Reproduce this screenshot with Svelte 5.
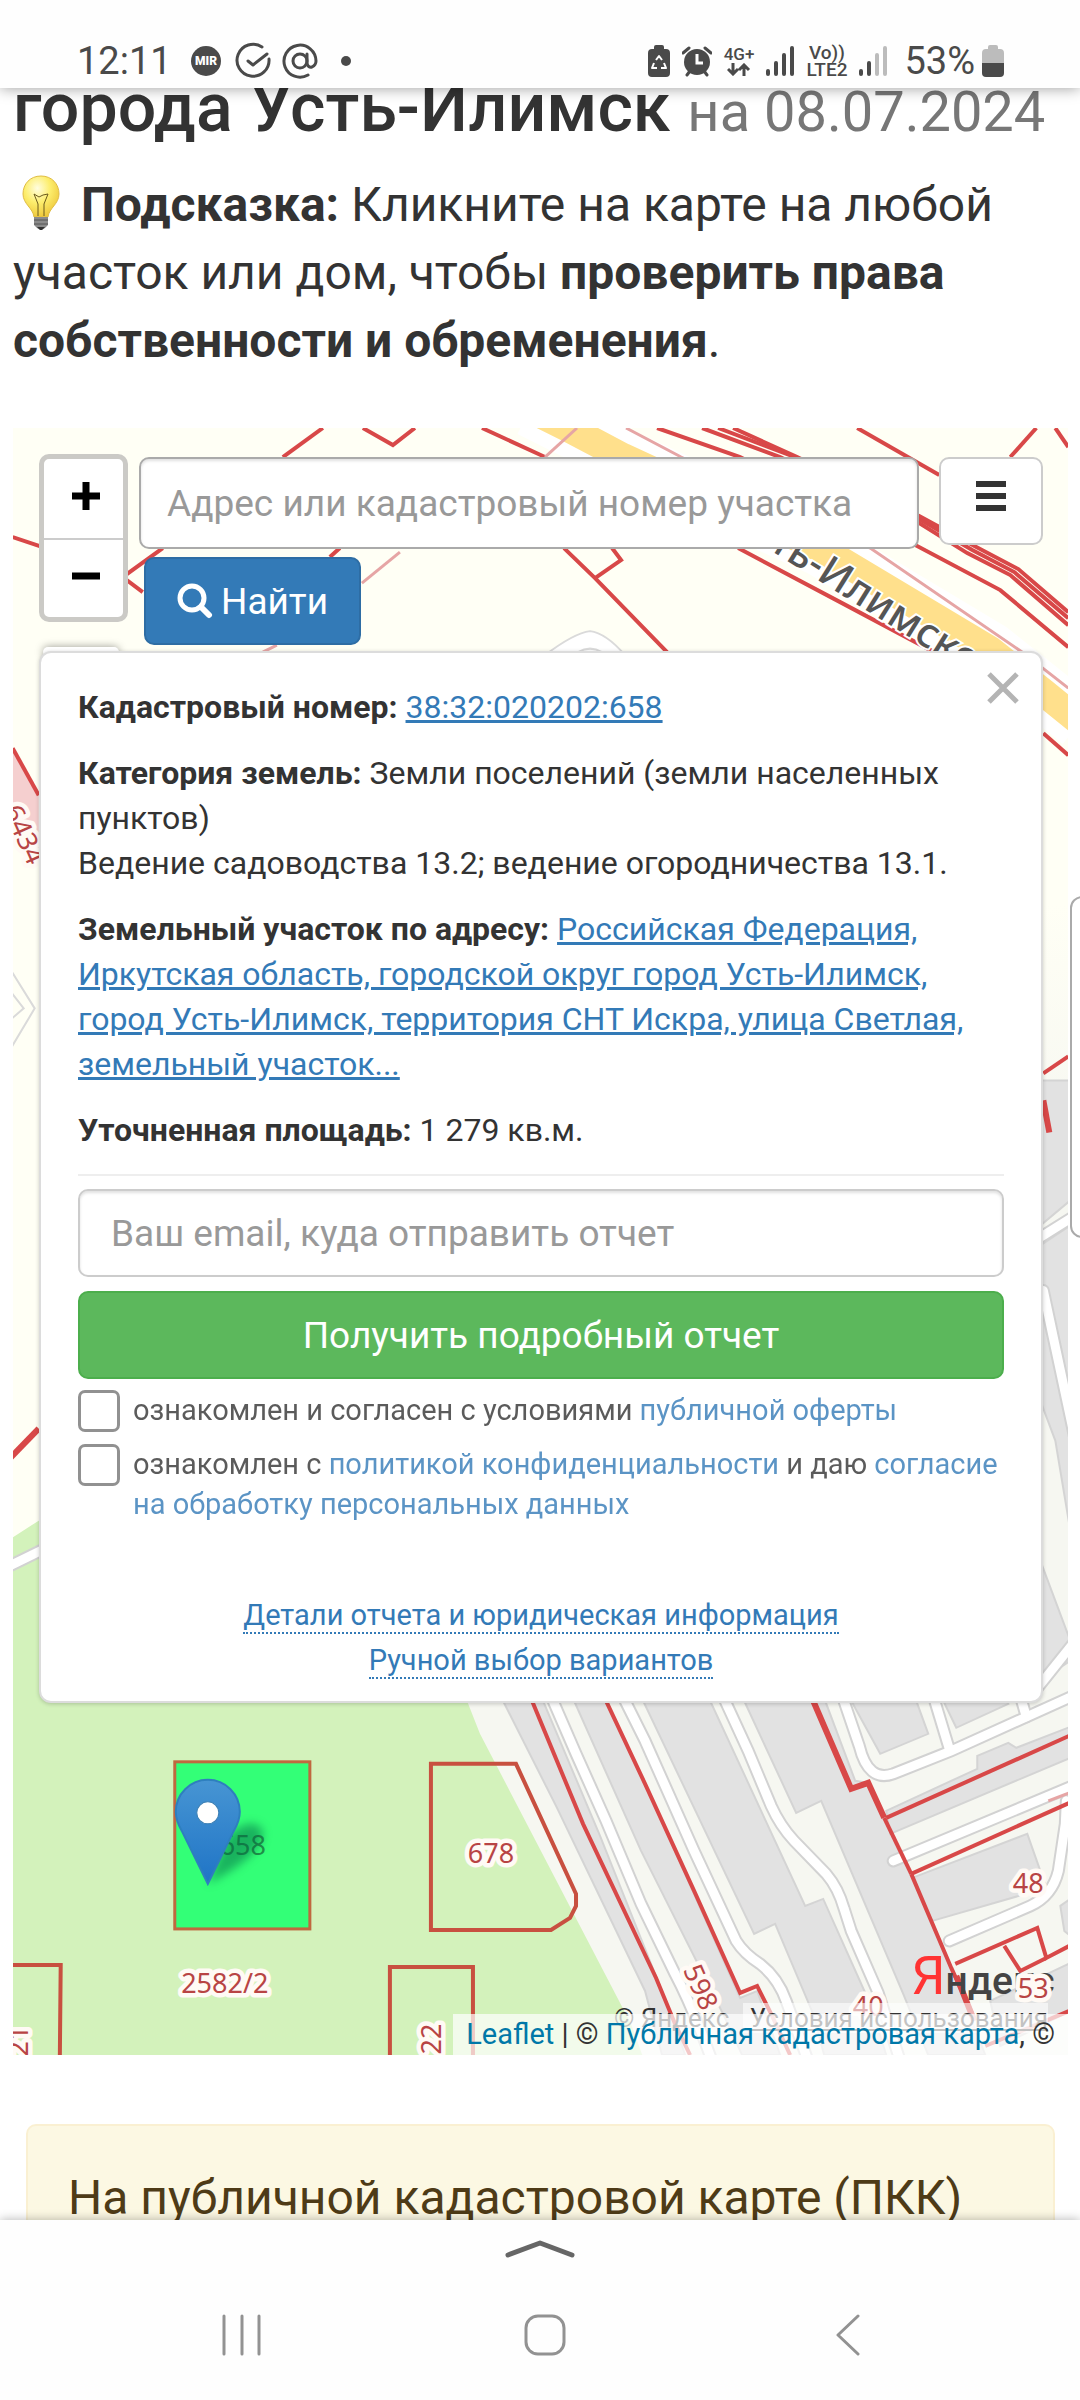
<script lang="ts">
    let query = $state("");
    let email = $state("");
    let offer = $state(false);
    let privacy = $state(false);

    const parcels = [
        "431,1763 516,1763 576,1893 576,1905 570,1917 551,1929 431,1929",
        "0,1964 61,1964 60,2070 0,2070",
        "390,2070 390,1966 473,1966 473,2070",
    ];

    // cadastral borders
    const borders = [
        "323,428 283,457",
        "363,428 393,445 415,428",
        "482,428 545,457",
        "13,537 43,547",
        "163,548 123,577 143,592",
        "340,548 330,557",
        "564,548 595,578 667,652",
        "612,548 621,560 595,578",
        "657,428 740,457 915,545 1000,590 1068,647",
        "702,428 780,457 919,523 967,553 1010,575 1068,625",
        "718,428 795,457 919,519 972,550 1014,572 1068,618",
        "733,428 797,457 919,516 976,547 1018,569 1068,612",
        "857,428 939,475",
        "1036,428 1010,457",
        "1055,428 1068,447",
        "738,548 840,602 934,652",
        "1043,733 1068,755",
        "13,748 39,795",
        "1043,1073 1068,1056",
        "532,1700 583,1823 656,1977 675,2023 690,2054",
        "606,1700 645,1783 694,1890 740,1992 757,1985 771,2013 790,2054",
        "886,1817 1069,1735",
        "911,1873 1069,1802",
        "911,1873 884,1817",
        "911,1873 951,1967 974,2017",
        "955,1963 1037,1927 1046,1957 1069,1945",
        "1004,1945 1020,1970 1046,1957",
        "985,2045 1069,2010",
    ];

    const thickBorders = [
        "39,1428 10,1458",
        "1043,1100 1049,1132",
        "813,1700 851,1788 868,1782 884,1817",
        "956,1975 974,2020",
    ];

    const faintBorders = [
        "577,428 545,457",
        "626,428 681,457 870,548 1022,652 1068,688",
        "400,552 362,583",
        "277,645 263,652",
        "1048,1800 1069,1792",
    ];

    const blocks = [
        "503,1700 543,1700 600,1835 671,2013 685,2054 662,2054 645,1990 557,1807",
        "574,1700 606,1700 657,1810 740,1997 757,1990 780,2054 742,2054 725,2017 641,1850",
        "643,1700 710,1700 805,1905 823,1898 870,2003 886,2054 824,2054 813,2013 775,1923 754,1933",
        "744,1700 825,1700 855,1780 868,1782 911,1873 955,1978 985,2054 928,2054 903,1993 821,1800 796,1812",
        "851,1700 880,1753 928,1733 916,1700",
        "943,1700 956,1727 1008,1703 1006,1700",
        "886,1810 977,1768 977,1755 1008,1742 1016,1747 1070,1726 1070,1757 890,1833",
        "912,1877 1027,1833 1046,1887 932,1920",
        "1060,1905 1070,1898 1070,1935 1064,1930",
        "1040,1080 1070,1080 1070,1200 1040,1225",
        "1040,1245 1070,1225 1070,1530 1055,1440 1040,1400",
        "1040,1560 1070,1640 1070,1660 1040,1680",
        "990,2000 1070,1962 1070,2010 1000,2045",
    ];

    const roads = [
        "M553 1700L576 1753L606 1820L641 1903L675 1973Q692 2005 712 2060",
        "M625 1700L645 1740L694 1850L736 1940Q744 1953 760 1963Q778 1977 786 2000L808 2060",
        "M725 1700L748 1750L771 1805Q780 1825 794 1840L826 1873Q838 1887 844 1908L851 1930L878 1992L900 2060",
        "M842 1695L859 1745Q868 1782 893 1773L951 1750L1075 1694",
        "M933 1695L949 1748",
        "M1020 1695L1026 1716",
        "M893 1860L1075 1784",
        "M949 1940L1030 1905Q1052 1895 1058 1870L1065 1823L1066 1800",
        "M0 1570L45 1548",
        "M1035 1240L1075 1215",
        "M1043 1290L1075 1440",
        "M1035 1690L1075 1640",
    ];

    const labels = [
        { text: "678", x: 491, y: 1862, turn: 0 },
        { text: "2582/2", x: 225, y: 1992, turn: 0 },
        { text: "598", x: 692, y: 1990, turn: 66 },
        { text: "48", x: 1028, y: 1892, turn: 0 },
        { text: "40", x: 868, y: 2015, turn: 0 },
        { text: "53", x: 1033, y: 1997, turn: 0 },
        { text: "22", x: 441, y: 2038, turn: -90 },
        { text: "21", x: 28, y: 2040, turn: -90 },
        { text: "6434", x: 16, y: 838, turn: 66 },
    ];
</script>

<div class="screen">
    <header class="status">
        <span class="clock">12:11</span>
        <svg class="notices" width="162" height="38" viewBox="0 0 162 38">
            <circle cx="16" cy="19" r="15" fill="#4a4a4a" />
            <text x="16" y="23" class="mir">MIR</text>
            <g fill="none" stroke="#4a4a4a" stroke-width="3" stroke-linecap="round" stroke-linejoin="round">
                <path d="M72 5A16 16 0 1 0 79 17" />
                <path d="M58 19L63 23L77 12" />
                <circle cx="110" cy="19" r="7" />
                <path d="M117 12V21Q118 26 122 25Q126 23 126 19A16 16 0 1 0 118 33" />
            </g>
            <circle cx="156" cy="19" r="5" fill="#4a4a4a" />
        </svg>
        <div class="indicators">
            <svg width="22" height="32" viewBox="0 0 22 32">
                <path d="M6 4V2Q6 0 8 0H14Q16 0 16 2V4H18Q22 4 22 8V28Q22 32 18 32H4Q0 32 0 28V8Q0 4 4 4Z" fill="#4a4a4a" />
                <path d="M8 15L11 11L14 15M16 18L18 23H13M9 23H4L6 18" fill="none" stroke="#fff" stroke-width="2" stroke-linejoin="round" />
            </svg>
            <svg width="30" height="32" viewBox="0 0 30 32">
                <circle cx="15" cy="17" r="13" fill="#4a4a4a" />
                <path d="M1 8L7 3M29 8L23 3M5 30L8 26M25 30L22 26" stroke="#4a4a4a" stroke-width="3" stroke-linecap="round" />
                <path d="M15 9V18H21" fill="none" stroke="#fff" stroke-width="3" />
            </svg>
            <span class="net data">
                4G+
                <svg width="24" height="13" viewBox="0 0 24 13" fill="none" stroke="#4a4a4a" stroke-width="3">
                    <path d="M6 0V11M1 6L6 11L11 6M17 13V2M12 7L17 2L22 7" />
                </svg>
            </span>
            <svg width="28" height="30" viewBox="0 0 28 30" stroke="#4a4a4a" stroke-width="4" stroke-linecap="round">
                <path d="M2 25V28M10 17V28M18 9V28M26 2V28" />
            </svg>
            <span class="net">Vo))<br />LTE2</span>
            <svg width="28" height="30" viewBox="0 0 28 30" stroke="#4a4a4a" stroke-width="4" stroke-linecap="round">
                <path d="M2 25V28M10 17V28" />
                <path d="M18 9V28M26 2V28" stroke="#bcbcbc" />
            </svg>
            <div class="battery">
                <span class="charge">53%</span>
                <svg width="22" height="32" viewBox="0 0 22 32">
                    <path d="M6 4V2Q6 0 8 0H14Q16 0 16 2V4H18Q22 4 22 8V18H0V8Q0 4 4 4Z" fill="#bcbcbc" />
                    <path d="M0 18H22V28Q22 32 18 32H4Q0 32 0 28Z" fill="#4a4a4a" />
                </svg>
            </div>
        </div>
    </header>

    <main>
        <h1>города Усть-Илимск <small>на 08.07.2024</small></h1>

        <p class="hint">
            <svg class="bulb" width="56" height="56" viewBox="0 0 56 56">
                <defs>
                    <radialGradient id="glow" cx=".4" cy=".3" r=".7">
                        <stop offset="0" stop-color="#fffde0" />
                        <stop offset=".5" stop-color="#fdee6e" />
                        <stop offset="1" stop-color="#eec93c" />
                    </radialGradient>
                </defs>
                <path d="M28 1C17 1 10 9 10 19C10 29 20 33 21 42H35C36 33 46 29 46 19C46 9 39 1 28 1Z" fill="url(#glow)" stroke="#e0bd45" />
                <path d="M25 41V29L21 19L26 22L30 20L35 19L31 29V41" fill="none" stroke="#6b5a1c" stroke-width="1" />
                <path d="M21 42H35V50L32 53Q28 56 24 53L21 50Z" fill="#8b8b8b" />
                <path d="M21 45H35M21 49H35" stroke="#555" />
                <path d="M24 52H32L29 55H27Z" fill="#333" />
            </svg>
            <b>Подсказка:</b> Кликните на карте на любой участок или дом, чтобы
            <b>проверить права собственности и обременения</b>.
        </p>

        <section class="map">
            <svg class="tiles" viewBox="13 428 1055 1626" preserveAspectRatio="xMidYMax slice">
                <defs>
                    <linearGradient id="ground" x1="0" y1="0" x2="0" y2="1">
                        <stop offset=".3" stop-color="#fffff5" />
                        <stop offset=".45" stop-color="#f6f7f1" />
                    </linearGradient>
                    <linearGradient id="pin" x1="0" y1="0" x2="0" y2="1">
                        <stop offset="0" stop-color="#4795d3" />
                        <stop offset="1" stop-color="#1f74c6" />
                    </linearGradient>
                    <filter id="soft" x="-50%" y="-50%" width="200%" height="200%">
                        <feGaussianBlur stdDeviation="5" />
                    </filter>
                </defs>
                <rect x="0" y="400" width="1080" height="1680" fill="url(#ground)" />
                <rect x="0" y="400" width="500" height="1200" fill="#fffff5" />
                <path d="M0 1545L39 1520L400 1560L467 1700L480 1733L631 2023L648 2070H0Z" fill="#d3f2bb" />
                <path d="M13 748L39 795V850L13 815Z" fill="#f5cfcf" />

                {#each blocks as points}
                    <polygon {points} class="block" />
                {/each}
                {#each roads as d}
                    <path {d} class="road casing" />
                {/each}
                {#each roads as d}
                    <path {d} class="road" />
                {/each}

                <path d="M530 409L568 428L623 457L820 548L990 650L1043 692L1080 722" fill="none" stroke="#fff" stroke-width="56" />
                <path d="M530 409L568 428L623 457L820 548L990 650L1043 692L1080 722" fill="none" stroke="#ffe08c" stroke-width="28" />
                <g fill="#fff" stroke="#dadada" stroke-width="2">
                    <path d="M545 655Q574 633 590 631Q606 633 625 655" />
                    <path d="M578 652Q590 645 602 652" />
                    <path d="M10 968L35 1008L10 1050M10 1020L24 1008L10 990" fill="none" />
                </g>

                {#each borders as points}
                    <polyline {points} class="border" />
                {/each}
                {#each thickBorders as points}
                    <polyline {points} class="border thick" />
                {/each}
                {#each faintBorders as points}
                    <polyline {points} class="border faint" />
                {/each}
                {#each parcels as points}
                    <polygon {points} class="border parcel" />
                {/each}

                <text class="street" transform="translate(768 549) rotate(32)">ть-Илимское</text>

                <rect x="175" y="1761" width="135" height="167" fill="#33ff77" stroke="#c0683f" stroke-width="3" />
                <text x="243" y="1854" class="selected">658</text>
                <path d="M208 1883L228 1835Q250 1815 262 1828Q270 1850 208 1883Z" fill="#064" opacity=".5" filter="url(#soft)" />
                <path d="M208 1883L182 1830Q176 1820 176 1811A32 32 0 0 1 240 1811Q240 1820 234 1830Z" fill="url(#pin)" stroke="#2e7fbe" stroke-width="2" />
                <circle cx="208" cy="1812" r="11" fill="#fff" stroke="#3a7fb5" />

                <text x="911" y="1993" class="yandex"><tspan class="initial">Я</tspan>ндекс</text>
                {#each labels as { text, x, y, turn }}
                    <text class="label" transform="translate({x} {y}) rotate({turn})">{text}</text>
                {/each}
            </svg>

            <div class="toolbar">
                <div class="zoom">
                    <button aria-label="Приблизить">
                        <svg width="28" height="28" viewBox="0 0 28 28"><path d="M0 14H28M14 0V28" /></svg>
                    </button>
                    <button aria-label="Отдалить">
                        <svg width="28" height="28" viewBox="0 0 28 28"><path d="M0 14H28" /></svg>
                    </button>
                </div>
                <form class="search">
                    <input
                        type="text"
                        aria-label="Адрес или кадастровый номер участка"
                        placeholder="Адрес или кадастровый номер участка"
                        bind:value={query}
                    />
                    <button class="find" type="button">
                        <svg width="36" height="36" viewBox="0 0 36 36" fill="none" stroke="#fff">
                            <circle cx="15" cy="15" r="12" stroke-width="5" />
                            <path d="M24 24L32 32" stroke-width="6" stroke-linecap="round" />
                        </svg>
                        Найти
                    </button>
                </form>
                <button class="menu" aria-label="Меню">
                    <svg width="32" height="32" viewBox="0 0 32 32" stroke="#333" stroke-width="6">
                        <path d="M1 4H31M1 16H31M1 28H31" />
                    </svg>
                </button>
                <span class="layers"></span>
            </div>

            <div class="popup">
                <button class="close" aria-label="Закрыть">
                    <svg width="34" height="34" viewBox="0 0 34 34" stroke="#b4b4b4" stroke-width="5">
                        <path d="M3 3L31 31M31 3L3 31" />
                    </svg>
                </button>
                <p><b>Кадастровый номер:</b> <a href="#parcel">38:32:020202:658</a></p>
                <p>
                    <b>Категория земель:</b> Земли поселений (земли населенных пунктов)<br />
                    Ведение садоводства 13.2; ведение огородничества 13.1.
                </p>
                <p>
                    <b>Земельный участок по адресу:</b>
                    <a href="#address">Российская Федерация, Иркутская область, городской округ город Усть-Илимск, город Усть-Илимск, территория СНТ Искра, улица Светлая, земельный участок...</a>
                </p>
                <p><b>Уточненная площадь:</b> 1 279 кв.м.</p>
                <form class="order">
                    <input
                        type="email"
                        aria-label="Ваш email"
                        placeholder="Ваш email, куда отправить отчет"
                        bind:value={email}
                    />
                    <button class="submit" type="button">Получить подробный отчет</button>
                    <div class="agree">
                        <input id="offer" type="checkbox" bind:checked={offer} />
                        <label for="offer">ознакомлен и согласен с условиями <a href="#offer">публичной оферты</a></label>
                    </div>
                    <div class="agree">
                        <input id="privacy" type="checkbox" bind:checked={privacy} />
                        <label for="privacy">
                            ознакомлен с <a href="#policy">политикой конфиденциальности</a> и даю
                            <a href="#consent">согласие на обработку персональных данных</a>
                        </label>
                    </div>
                </form>
                <div class="more">
                    <a href="#details">Детали отчета и юридическая информация</a><br />
                    <a href="#manual">Ручной выбор вариантов</a>
                </div>
            </div>

            <div class="terms">© Яндекс <a href="#terms">Условия использования</a></div>
            <div class="credits">
                <a href="#leaflet">Leaflet</a> | © <a href="#pkk">Публичная кадастровая карта</a>, ©
            </div>
        </section>

        <div class="alert">На публичной кадастровой карте (ПКК)</div>
        <span class="handle"></span>
    </main>

    <footer>
        <svg class="pull" width="70" height="22" viewBox="0 0 70 22" fill="none" stroke="#666" stroke-width="5" stroke-linecap="round" stroke-linejoin="round">
            <path d="M3 17L35 5L67 17" />
        </svg>
        <nav>
            <button aria-label="Недавние">
                <svg width="42" height="42" viewBox="0 0 42 42"><path d="M3 2V40M21 2V40M38 2V40" /></svg>
            </button>
            <button aria-label="Домой">
                <svg width="42" height="42" viewBox="0 0 42 42"><rect x="2" y="2" width="38" height="38" rx="12" /></svg>
            </button>
            <button aria-label="Назад">
                <svg width="42" height="42" viewBox="0 0 42 42"><path d="M31 2L11 21L31 40" /></svg>
            </button>
        </nav>
    </footer>
</div>

<style>
    :global(body) {
        background: #fff;
        color: #333;
        font-family: Roboto, sans-serif;
    }

    * {
        box-sizing: border-box;
    }

    button,
    input {
        font-family: inherit;
        margin: 0;
    }

    button {
        padding: 0;
        border: 0;
        background: none;
    }

    a {
        color: #337ab7;
    }

    .screen {
        display: flex;
        flex-direction: column;
        height: 100vh;
    }

    .status {
        display: flex;
        align-items: center;
        padding: 34px 76px 0 77px;
        height: 88px;
        color: #4a4a4a;
        background: #fefefe;
        box-shadow: 0 0 14px rgba(0, 0, 0, 0.4);
        z-index: 2;
    }

    .clock,
    .charge {
        font-size: 38px;
        line-height: 54px;
    }

    .notices {
        margin-left: 18px;
    }

    .mir {
        font-size: 12px;
        font-weight: 900;
        fill: #fff;
        text-anchor: middle;
    }

    .indicators {
        display: flex;
        align-items: center;
        gap: 12px;
        margin-left: auto;
    }

    .indicators svg {
        flex: none;
    }

    .battery {
        display: flex;
        align-items: center;
        gap: 7px;
        margin-left: 5px;
    }

    .net {
        display: block;
        font-size: 19px;
        font-weight: 500;
        line-height: 17px;
        text-align: center;
    }

    .data {
        font-size: 17px;
    }

    .net svg {
        display: block;
        margin: 0 auto;
    }

    main {
        position: relative;
        flex: 1;
        min-height: 0;
        overflow: hidden;
        padding: 0 12px 0 13px;
    }

    h1 {
        margin: -18px 0 0;
        font-size: 68px;
        font-weight: 500;
        line-height: 76px;
        white-space: nowrap;
    }

    small {
        font-size: 56px;
        font-weight: 400;
        color: #777;
    }

    .hint {
        margin: 21px 0 53px;
        font-size: 48px;
        line-height: 68px;
    }

    .bulb {
        vertical-align: -10px;
    }

    .map {
        position: relative;
        padding: 26px 25px 352px 26px;
        overflow: hidden;
    }

    .tiles {
        position: absolute;
        inset: 0;
        width: 100%;
        height: 100%;
    }

    .block {
        fill: #e2e2e2;
        stroke: #d4d4d4;
        stroke-width: 2;
    }

    .road {
        fill: none;
        stroke: #fff;
        stroke-width: 9;
        stroke-linecap: round;
    }

    .road.casing {
        stroke: #d2d2d2;
        stroke-width: 13;
    }

    .border {
        fill: none;
        stroke: #d84848;
        stroke-width: 4;
    }

    .thick {
        stroke-width: 6;
    }

    .faint {
        stroke: #e6a5a5;
        stroke-width: 3;
    }

    .parcel {
        stroke: #c85040;
    }

    .label,
    .selected {
        font-family: "Noto Sans", sans-serif;
        font-size: 27px;
        text-anchor: middle;
    }

    .label {
        fill: #b84444;
        stroke: #fffaf5;
        stroke-width: 9;
        stroke-linejoin: round;
        paint-order: stroke;
    }

    .selected {
        fill: #209048;
    }

    .street {
        font-family: "Noto Sans", sans-serif;
        font-size: 41px;
        font-weight: 500;
        fill: #555;
        stroke: #fff;
        stroke-width: 4;
        paint-order: stroke;
    }

    .yandex {
        font-size: 39px;
        font-weight: 500;
        fill: #444;
    }

    .initial {
        font-size: 54px;
        font-weight: 400;
        fill: #f33;
    }

    .toolbar {
        position: relative;
        display: flex;
        align-items: flex-start;
        height: 197px;
    }

    .zoom {
        display: flex;
        flex-direction: column;
        border: 5px solid #cbcac6;
        border-radius: 10px;
        background: #fff;
    }

    .zoom button {
        display: grid;
        place-items: center;
        width: 79px;
        height: 79px;
        padding: 0 0 6px 5px;
    }

    .zoom button + button {
        border-top: 2px solid #ccc;
    }

    .zoom path {
        stroke: #000;
        stroke-width: 7;
    }

    .search {
        flex: 1;
        margin: 3px 20px 0 11px;
    }

    .search input,
    .order input[type="email"] {
        display: block;
        width: 100%;
        height: 88px;
        padding: 0 31px;
        border: 2px solid #ccc;
        border-radius: 10px;
        background: #fff;
        box-shadow: inset 0 2px 3px rgba(0, 0, 0, 0.12);
        font-size: 37px;
        color: #555;
    }

    .search input {
        height: 92px;
        padding: 0 26px;
        border-color: #aaa;
    }

    input::placeholder {
        color: #999;
        opacity: 1;
    }

    .find {
        display: flex;
        align-items: center;
        justify-content: center;
        gap: 8px;
        width: 217px;
        height: 88px;
        margin: 8px 0 0 5px;
        border: 2px solid #2e6da4;
        border-radius: 10px;
        background: #337ab7;
        font-size: 37px;
        color: #fff;
    }

    .menu {
        width: 104px;
        height: 88px;
        margin-top: 3px;
        padding-bottom: 8px;
        border: 2px solid #ccc;
        border-radius: 10px;
        background: #fff;
    }

    .layers {
        position: absolute;
        left: 4px;
        bottom: -6px;
        width: 76px;
        height: 10px;
        border-radius: 10px;
        background: #fff;
        box-shadow: 0 0 8px rgba(0, 0, 0, 0.4);
    }

    .popup {
        position: relative;
        padding: 32px 37px 18px;
        border: 2px solid #dcdcdc;
        border-radius: 12px;
        background: #fff;
        box-shadow: 0 1px 4px rgba(0, 0, 0, 0.2);
        font-size: 32px;
        line-height: 45px;
    }

    .popup p {
        margin: 0 0 21px;
    }

    .close {
        position: absolute;
        top: 18px;
        right: 21px;
        line-height: 0;
    }

    .order {
        padding-top: 13px;
        border-top: 2px solid #eee;
    }

    .submit {
        width: 100%;
        height: 88px;
        margin: 14px 0 11px;
        border: 2px solid #4cae4c;
        border-radius: 10px;
        background: #5cb85c;
        font-size: 37px;
        color: #fff;
    }

    .agree {
        display: flex;
        align-items: flex-start;
        gap: 13px;
        margin-bottom: 12px;
        font-size: 29px;
        line-height: 40px;
        opacity: 0.8;
    }

    .agree input {
        appearance: none;
        flex: none;
        width: 42px;
        height: 42px;
        border: 3px solid #767676;
        border-radius: 7px;
        background: #fff;
    }

    .agree a {
        text-decoration: none;
    }

    .more {
        margin-top: 69px;
        text-align: center;
        font-size: 29px;
    }

    .more a {
        border-bottom: 2px dotted #337ab7;
        text-decoration: none;
    }

    .terms,
    .credits {
        position: absolute;
        right: 0;
        bottom: 0;
        white-space: nowrap;
    }

    .terms {
        right: 20px;
        bottom: 21px;
        font-size: 26px;
        line-height: 32px;
        color: #333;
    }

    .terms a {
        margin-left: 7px;
        padding-left: 7px;
        background: rgba(255, 255, 255, 0.6);
        color: #333;
    }

    .credits {
        padding: 0 13px;
        background: rgba(255, 255, 255, 0.7);
        font-size: 29px;
        line-height: 41px;
    }

    .credits a {
        color: #0078a8;
        text-decoration: none;
    }

    .alert {
        margin: 69px 13px 0;
        padding: 38px 40px;
        border: 2px solid #faf0d2;
        border-radius: 10px;
        background: #fcf8e3;
        color: #4e3b17;
        font-size: 48px;
        line-height: 68px;
    }

    .handle {
        position: absolute;
        top: 808px;
        right: -20px;
        width: 30px;
        height: 342px;
        border: 2px solid #aaa;
        border-radius: 12px;
        background: #fff;
    }

    footer {
        display: flex;
        flex-direction: column;
        align-items: center;
        height: 180px;
        background: #fefefe;
        box-shadow: 0 0 10px rgba(0, 0, 0, 0.3);
        z-index: 2;
    }

    .pull {
        margin-top: 18px;
    }

    nav {
        display: grid;
        grid-template-columns: repeat(3, 1fr);
        width: 100%;
        margin-top: 54px;
        padding: 0 81px 0 91px;
    }

    nav svg {
        fill: none;
        stroke: #929292;
        stroke-width: 3;
        stroke-linecap: round;
        stroke-linejoin: round;
    }
</style>
